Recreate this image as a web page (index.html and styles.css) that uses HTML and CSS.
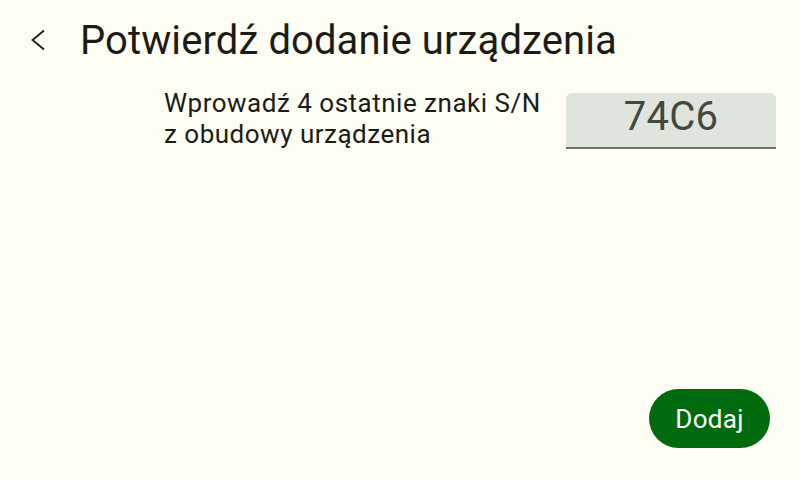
FILE: index.html
```html
<!DOCTYPE html>
<html lang="pl">
<head>
    <meta charset="UTF-8">
    <meta name="viewport" content="width=device-width, initial-scale=1.0">
    <title>Potwierdź dodanie urządzenia</title>
    <link rel="stylesheet" href="styles.css">
</head>
<body>
    <div class="screen">
        <div class="header">
            <button class="back-button" aria-label="Wstecz">
                <svg width="24" height="24" viewBox="0 0 24 24">
                    <path d="M18 2.5 L6.5 12 L18 21.5" fill="none" stroke="#1c1c17" stroke-width="1.8"/>
                </svg>
            </button>
            <h1>Potwierdź dodanie urządzenia</h1>
        </div>

        <div class="content">
            <div class="sn-row">
                <div class="sn-label">
                    Wprowadź 4 ostatnie znaki S/N<br>
                    z obudowy urządzenia
                </div>
                <div class="sn-field">74C6</div>
            </div>
        </div>

        <div class="footer">
            <button class="add-button">Dodaj</button>
        </div>
    </div>
</body>
</html>
```

FILE: styles.css
```css
* {
    margin: 0;
    padding: 0;
    box-sizing: border-box;
}

body {
    font-family: Roboto, 'Noto Sans', sans-serif;
    background: #fefef4;
    color: #1c1c17;
    width: 800px;
    height: 480px;
    overflow: hidden;
}

.screen {
    display: flex;
    flex-direction: column;
    height: 100%;
}

.header {
    display: flex;
    align-items: center;
    height: 80px;
    padding-left: 26px;
}

.back-button {
    width: 24px;
    height: 24px;
    border: none;
    background: none;
    display: flex;
    margin-right: 30px;
}

.header h1 {
    font-size: 40px;
    font-weight: 400;
    letter-spacing: 0.1px;
}

.content {
    flex: 1;
    padding: 8px 24px 0 164px;
}

.sn-row {
    display: flex;
    align-items: flex-start;
}

.sn-label {
    font-size: 26px;
    line-height: 31px;
    width: 402px;
    letter-spacing: 0.5px;
    white-space: nowrap;
}

.sn-field {
    width: 210px;
    height: 56px;
    margin-top: 5px;
    background: #dfe5dc;
    border-radius: 6px 6px 0 0;
    border-bottom: 2px solid #6b7366;
    color: #424940;
    font-size: 40px;
    line-height: 48px;
    text-align: center;
    letter-spacing: 0.2px;
}

.footer {
    display: flex;
    justify-content: flex-end;
    padding: 0 30px 32px 0;
}

.add-button {
    width: 121px;
    height: 59px;
    border: none;
    border-radius: 30px;
    background: #006b0e;
    color: #fff;
    font-family: Roboto, sans-serif;
    font-size: 26px;
    letter-spacing: 0.3px;
}
```
